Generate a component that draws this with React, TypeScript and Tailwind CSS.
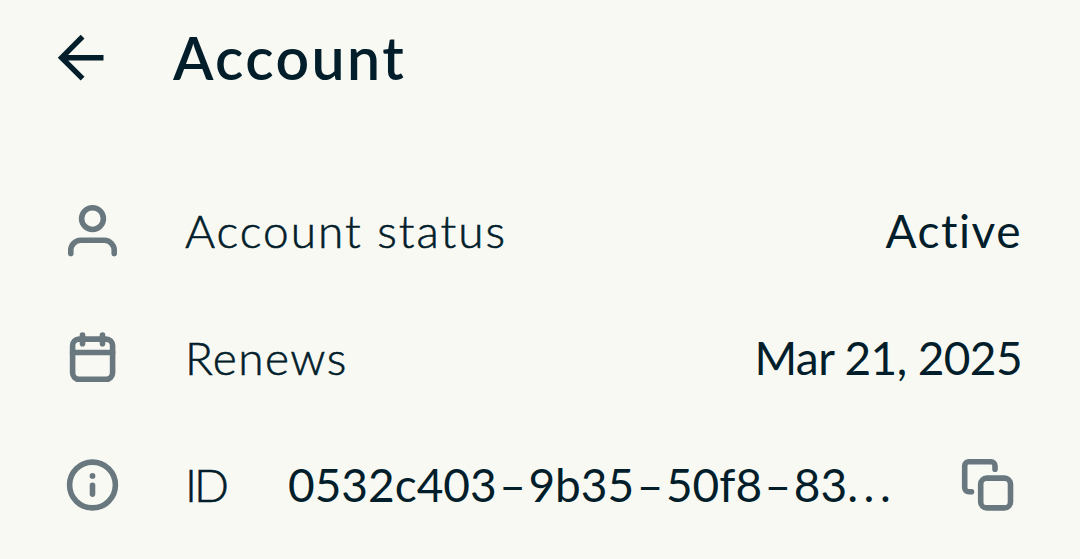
import React from 'react';

const ArrowLeftIcon = () => (
  <svg width="50" height="50" viewBox="0 0 50 50" fill="none" stroke="currentColor" strokeWidth="5.4">
    <path d="M26.6 3.7 L5.6 24.7 L26.6 45.7 M5.6 24.7 H47.5" />
  </svg>
);

const UserIcon = () => (
  <svg width="56" height="56" viewBox="0 0 56 56" fill="none" stroke="currentColor" strokeWidth="5.6" strokeLinecap="round">
    <circle cx="28.5" cy="14.6" r="10.9" />
    <path d="M6.8 49.6 V46.4 A10 10 0 0 1 16.8 36.3 H40.4 A10 10 0 0 1 50.2 46.4 V49.6" />
  </svg>
);

const CalendarIcon = () => (
  <svg width="56" height="56" viewBox="0 0 56 56" fill="none" stroke="currentColor" strokeWidth="5.6" strokeLinecap="round">
    <rect x="8.6" y="8.1" width="40" height="40.2" rx="6.5" />
    <path d="M8.6 21.5 H48.6 M18.5 4.1 V12.8 M38.5 4.1 V12.8" />
  </svg>
);

const InfoIcon = () => (
  <svg width="56" height="56" viewBox="0 0 56 56" fill="none" stroke="currentColor" strokeWidth="5.6" strokeLinecap="round">
    <circle cx="28.5" cy="27" r="22.9" />
    <path d="M28.5 27.3 V36.1" />
    <circle cx="28.5" cy="17.9" r="2.9" fill="currentColor" stroke="none" />
  </svg>
);

const CopyIcon = () => (
  <svg width="56" height="56" viewBox="0 0 56 56" fill="none" stroke="currentColor" strokeWidth="5.6" strokeLinecap="round">
    <rect x="20.7" y="20.1" width="29.8" height="29.8" rx="6" />
    <path d="M35 11.2 V7.8 A4 4 0 0 0 31 3.8 H8.7 A4 4 0 0 0 4.7 7.8 V29.8 A4 4 0 0 0 8.7 33.8 H11.5" />
  </svg>
);

const idParts = ['0532c403', '9b35', '50f8', '83'];

const App: React.FC = () => {
  return (
    <div className="h-[559px] w-[1080px] overflow-hidden bg-[#f9f9f4] font-['Lato',sans-serif] text-[#021e2b] [font-variant-ligatures:none]">
      <header className="flex h-[116px] items-center pl-[56px]">
        <button aria-label="Back" className="flex">
          <ArrowLeftIcon />
        </button>
        <h1 className="ml-[67px] pb-[2px] text-[59px] leading-none font-semibold tracking-[2.4px]">Account</h1>
      </header>

      <main className="pt-[52px] pr-[59px] pl-[64px] text-[46px] leading-none whitespace-nowrap">
        <div className="flex h-[127px] items-center">
          <span className="text-[#69787f]"><UserIcon /></span>
          <span className="ml-[65px] pb-[2px] font-light tracking-[2px] [-webkit-text-stroke:0.6px]">Account status</span>
          <span className="-mr-px ml-auto pb-[2px] tracking-[1.5px]">Active</span>
        </div>

        <div className="flex h-[127px] items-center">
          <span className="text-[#69787f]"><CalendarIcon /></span>
          <span className="ml-[65px] pb-[2px] font-light tracking-[1.4px] [-webkit-text-stroke:0.6px]">Renews</span>
          <span className="-mr-px ml-auto pb-[2px] tracking-[-0.6px]">Mar 21, 2025</span>
        </div>

        <div className="flex h-[127px] items-center">
          <span className="text-[#69787f]"><InfoIcon /></span>
          <span className="ml-[65px] w-[42px] pb-[2px] font-light tracking-[-3px] [-webkit-text-stroke:0.6px]">ID</span>
          <span className="ml-[61px] pb-[2px]">
            {idParts.map((part, i) => (
              <React.Fragment key={part}>
                {i > 0 && <span className="mx-[2.5px]">–</span>}
                <span>{part}</span>
              </React.Fragment>
            ))}
            <span className="tracking-[5.6px]">...</span>
          </span>
          <button aria-label="Copy ID" className="mr-[5px] ml-auto text-[#69787f]"><CopyIcon /></button>
        </div>
      </main>
    </div>
  );
};

export default App;
